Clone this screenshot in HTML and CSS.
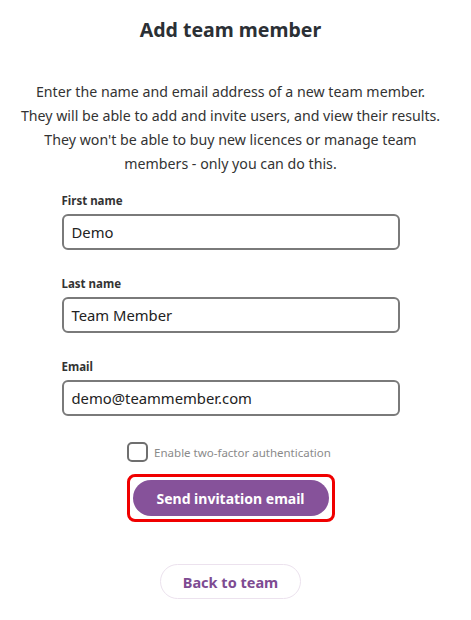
FILE: index.html
```html
<!DOCTYPE html>
<html>
<head>
<meta charset="utf-8">
<link rel="stylesheet" href="styles.css">
</head>
<body>
<div class="page">
  <h1 class="title">Add team member</h1>
  <p class="intro">Enter the name and email address of a new team member.<br>They will be able to add and invite users, and view their results.<br>They won't be able to buy new licences or manage team<br>members - only you can do this.</p>
  <form class="form">
    <div class="field">
      <label class="label">First name</label>
      <div class="input">Demo</div>
    </div>
    <div class="field">
      <label class="label">Last name</label>
      <div class="input">Team Member</div>
    </div>
    <div class="field">
      <label class="label">Email</label>
      <div class="input">demo@teammember.com</div>
    </div>
    <div class="check-row">
      <span class="checkbox"></span>
      <span class="check-label">Enable two-factor authentication</span>
    </div>
    <div class="highlight">
      <button type="button" class="btn-primary">Send invitation email</button>
    </div>
    <button type="button" class="btn-secondary">Back to team</button>
  </form>
</div>
</body>
</html>
```
FILE: styles.css
```css
* { box-sizing: border-box; }
body {
  margin: 0;
  background: #fff;
  font-family: "Noto Sans", "Open Sans", sans-serif;
  color: #333;
}
.page {
  width: 461px;
  display: flex;
  flex-direction: column;
  align-items: center;
}
.title {
  margin: 18px 0 0;
  font-size: 19.5px;
  line-height: 24px;
  font-weight: 700;
  color: #2b3035;
}
.intro {
  margin: 38px 0 0;
  font-size: 14.2px;
  line-height: 24px;
  text-align: center;
  color: #333;
}
.form {
  width: 338px;
  margin-top: 17px;
  display: flex;
  flex-direction: column;
  align-items: center;
}
.field {
  width: 100%;
  margin-bottom: 26px;
}
.label {
  display: block;
  font-size: 11.5px;
  line-height: 16px;
  font-weight: 700;
  color: #333;
  margin-bottom: 5px;
}
.input {
  height: 36px;
  border: 2px solid #7a7a7a;
  border-radius: 6px;
  padding: 0 8px;
  display: flex;
  align-items: center;
  font-size: 14.8px;
  color: #222;
}
.check-row {
  display: flex;
  align-items: center;
  gap: 6px;
  height: 20px;
  margin-left: -3px;
}
.checkbox {
  width: 21px;
  height: 20px;
  border: 2px solid #6f6f6f;
  border-radius: 5px;
}
.check-label {
  font-size: 11.5px;
  color: #8a8a8a;
}
.highlight {
  margin-top: 12px;
  border: 3px solid #f00000;
  border-radius: 8px;
  padding: 3px;
}
.btn-primary {
  display: block;
  width: 196px;
  height: 36px;
  border: 0;
  border-radius: 18px;
  background: #86529a;
  color: #fff;
  font-family: inherit;
  font-size: 14px;
  font-weight: 700;
}
.btn-secondary {
  margin-top: 42px;
  width: 141px;
  height: 35px;
  border: 1px solid #ece2ee;
  border-radius: 18px;
  background: #fff;
  color: #7e4b92;
  font-family: inherit;
  font-size: 14.5px;
  font-weight: 700;
}
```
